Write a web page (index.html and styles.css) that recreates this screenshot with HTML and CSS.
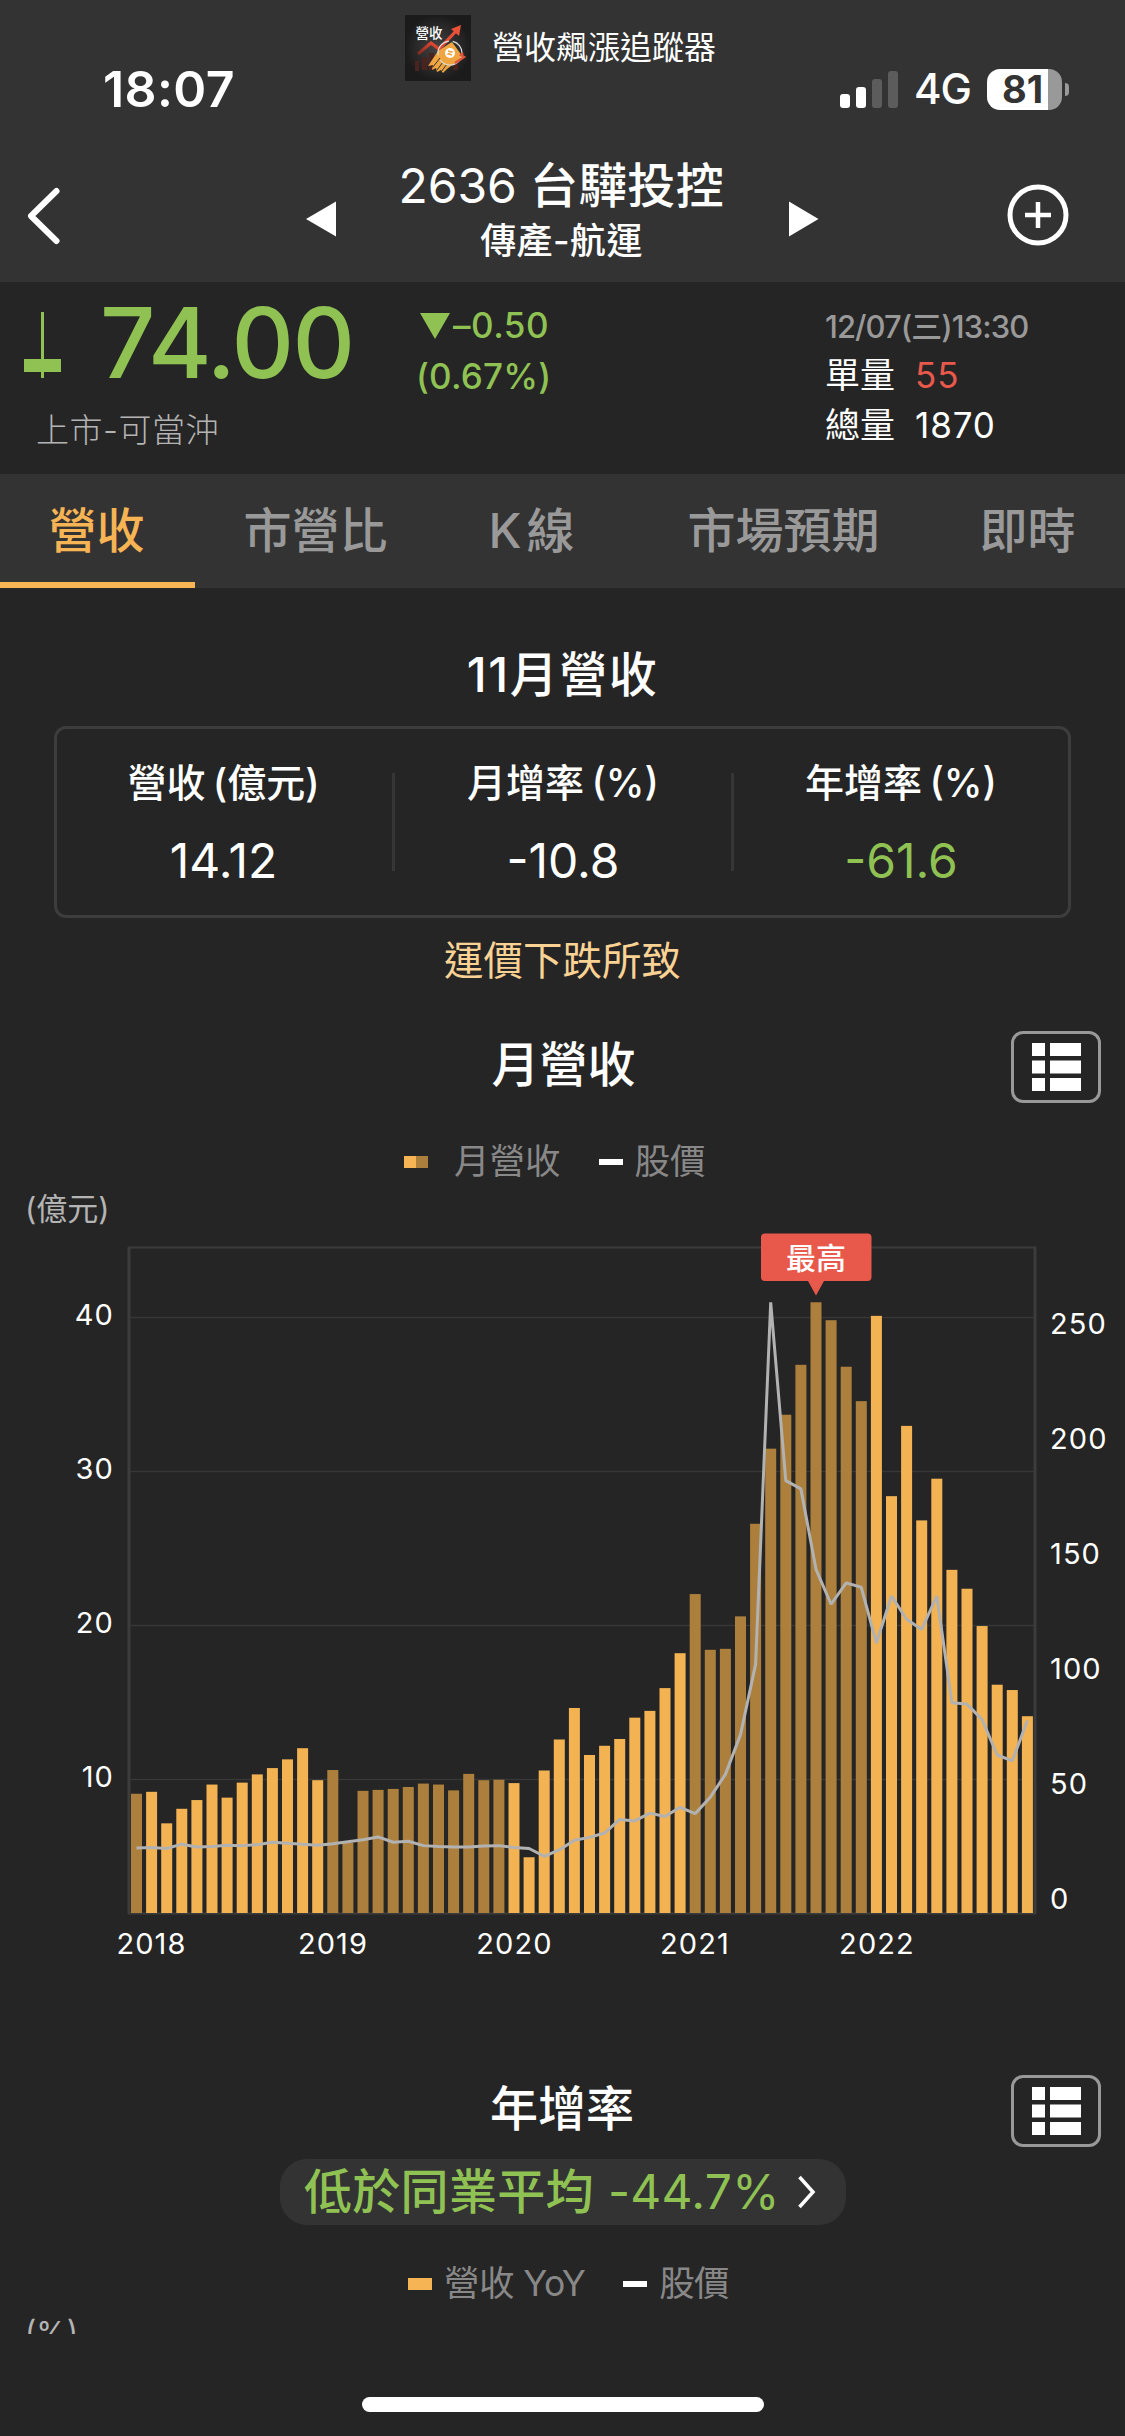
FILE: index.html
```html
<!DOCTYPE html>
<html lang="zh-Hant">
<head>
<meta charset="utf-8">
<title>2636 台驊投控</title>
<link rel="stylesheet" href="styles.css">
</head>
<body>
<div class="screen">
  <header class="header">
    <div class="status">
      <div class="time">18:07</div>
      <div class="app">
        <svg class="app-icon" viewBox="0 0 66 66">
          <defs>
            <radialGradient id="glow"><stop offset="0" stop-color="#444"/><stop offset="1" stop-color="#1b1b1b"/></radialGradient>
            <linearGradient id="rise" x1="0" y1="1" x2="1" y2="0"><stop offset="0" stop-color="#7a2a20"/><stop offset=".4" stop-color="#e0452f"/><stop offset="1" stop-color="#ea5238"/></linearGradient>
          </defs>
          <rect width="66" height="66" fill="url(#glow)"/>
          <path d="M10 46h4v10h-4zM17 42h5v13h-5zM24 38h5v17h-5zM48 44h5v11h-5z" fill="#4a231f"/>
          <path d="M13 39L26 28L34 34L52 15" fill="none" stroke="url(#rise)" stroke-width="3.2"/>
          <path d="M56 10L54 21L46 14Z" fill="#ea5238"/>
          <path d="M33 36L47 27L58 42L42 54L38 58L36 55L32 57L31 53L27 55L28 50L23 51Z" fill="#efa640"/>
          <path d="M28 52L35 43M32 55L38 47M36 57L42 49" stroke="#333" stroke-width="1"/>
          <circle cx="45" cy="38" r="12" fill="none" stroke="#ddd" stroke-width="1.2" stroke-dasharray="30 5 20 4"/>
          <circle cx="45" cy="38" r="5" fill="#fff"/>
          <path d="M43 36l4 1-4 2 4 1" fill="none" stroke="#efa640" stroke-width="1.3"/>
          <path d="M50 48L59 42L56 40L58 38" fill="none" stroke="#e0553b" stroke-width="2.5"/>
          <text x="10.500" y="23" class="app-icon-text">營收</text>
        </svg>
        <span class="app-name">營收飆漲追蹤器</span>
      </div>
      <div class="indicators">
        <svg class="signal" viewBox="0 0 58 38">
          <rect x="0" y="24" width="10" height="14" rx="3" fill="#fff"/>
          <rect x="16" y="17" width="10" height="21" rx="3" fill="#fff"/>
          <rect x="32" y="9" width="10" height="29" rx="3" fill="#5c5c5c"/>
          <rect x="48" y="1" width="10" height="37" rx="3" fill="#5c5c5c"/>
        </svg>
        <span class="network">4G</span>
        <span class="battery">81</span>
        <span class="battery-cap"></span>
      </div>
    </div>
    <nav class="nav">
      <svg class="back" viewBox="0 0 40 60"><path d="M33.500 5L8 30L33.500 55" fill="none" stroke="#fff" stroke-width="6" stroke-linecap="round" stroke-linejoin="round"/></svg>
      <svg class="tri" viewBox="0 0 30 36"><path d="M0 18L30 0.500V35.500Z" fill="#fff"/></svg>
      <div class="title-block">
        <h1 class="title"><span class="code">2636 </span>台驊投控</h1>
        <div class="sector">傳產-航運</div>
      </div>
      <svg class="tri" viewBox="0 0 30 36"><path d="M29.500 18L0 0.500V35.500Z" fill="#fff"/></svg>
      <svg class="add" viewBox="0 0 62 62"><circle cx="31" cy="31" r="28" fill="none" stroke="#fff" stroke-width="5"/><path d="M18 31H44M31 18V44" stroke="#fff" stroke-width="4.500"/></svg>
    </nav>
  </header>

  <section class="quote">
    <div class="price-col">
      <div class="price-row">
        <svg class="candle" viewBox="0 0 37 66"><path d="M18.500 0V66" stroke="#8fc253" stroke-width="3"/><rect y="47" width="37" height="13" fill="#8fc253"/></svg>
        <span class="price">74.00</span>
      </div>
      <div class="market">上市-可當沖</div>
    </div>
    <div class="change">
      <div class="change-row"><svg class="down" viewBox="0 0 30 26"><path d="M0 0H30L15 26Z" fill="#8fc253"/></svg><span class="delta">–0.50</span></div>
      <div class="change-row pct">(0.67%)</div>
    </div>
    <div class="volume">
      <div class="stamp">12/07(三)13:30</div>
      <div class="vol-row"><span>單量</span><span class="vol red">55</span></div>
      <div class="vol-row"><span>總量</span><span class="vol">1870</span></div>
    </div>
  </section>

  <div class="tabs">
    <div class="tab active">營收</div>
    <div class="tab">市營比</div>
    <div class="tab">K<span class="thin-gap"></span>線</div>
    <div class="tab">市場預期</div>
    <div class="tab">即時</div>
  </div>

  <main class="content">
    <h2 class="heading first">11月營收</h2>
    <div class="card">
      <div class="cell"><div class="label">營收 (億元)</div><div class="value">14.12</div></div>
      <div class="cell"><div class="label">月增率 (%)</div><div class="value">-10.8</div></div>
      <div class="cell"><div class="label">年增率 (%)</div><div class="value green">-61.6</div></div>
    </div>
    <div class="note">運價下跌所致</div>

    <div class="section-head">
      <h2 class="heading month">月營收</h2>
      <div class="table-btn"><svg viewBox="0 0 49 48"><path d="M0 0h13v13H0zM18 0h31v13H18zM0 17.500h13v13H0zM18 17.500h31v13H18zM0 35h13v13H0zM18 35h31v13H18z" fill="#fff"/></svg></div>
    </div>
    <div class="legend">
      <i class="swatch two"></i><span class="legend-text wide">月營收</span>
      <i class="dash"></i><span class="legend-text">股價</span>
    </div>
    <div class="unit">(億元)</div>
    <svg class="chart" id="chart" width="1125" height="760" viewBox="0 1228 1125 760"></svg>

    <div class="section-head second">
      <h2 class="heading">年增率</h2>
      <div class="table-btn"><svg viewBox="0 0 49 48"><path d="M0 0h13v13H0zM18 0h31v13H18zM0 17.500h13v13H0zM18 17.500h31v13H18zM0 35h13v13H0zM18 35h31v13H18z" fill="#fff"/></svg></div>
    </div>
    <div class="pill"><span class="pill-text">低於同業平均 </span><span class="pill-num">-44.7%</span><svg class="more" viewBox="0 0 20 36"><path d="M2.500 3L16 18L2.500 33" fill="none" stroke="#fff" stroke-width="3.500"/></svg></div>
    <div class="legend yoy">
      <i class="swatch"></i><span class="legend-text">營收 YoY</span>
      <i class="dash"></i><span class="legend-text">股價</span>
    </div>
    <div class="clip"><div class="unit">(%)</div></div>
  </main>
  <div class="home"></div>
</div>
<script src="chart.js"></script>
</body>
</html>
```
FILE: styles.css
```css
* { box-sizing: border-box; }
body {
  margin: 0;
  background: #252525;
  color: #fff;
  font-family: Inter, "Noto Sans CJK TC", sans-serif;
}
h1, h2 { margin: 0; }
svg { display: block; }
.screen { width: 1125px; height: 2436px; overflow: hidden; display: flex; flex-direction: column; }

/* status bar and navigation */
.header { height: 282px; background: #333; flex: none; }
.status { height: 133px; display: grid; grid-template-columns: 404px 436px 285px; }
.time { padding: 59px 0 0 103px; font-size: 50px; line-height: 60px; font-weight: 600; letter-spacing: 0.4px; }
.app { display: flex; align-items: center; height: 66px; margin: 15px 0 0 1px; gap: 21px; }
.app-icon { width: 66px; height: 66px; }
.app-icon-text { font-size: 13.5px; font-weight: 500; fill: #fff; }
.app-name { font-size: 32px; line-height: 40px; }
.indicators { display: flex; align-items: center; height: 42px; margin-top: 68px; }
.signal { width: 58px; height: 38px; }
.network { font-size: 42px; line-height: 42px; width: 58px; margin-left: 16px; letter-spacing: -1px; font-weight: 500; }
.battery {
  width: 75px; height: 41px; margin-left: 15px; padding-right: 4px; border-radius: 13px;
  background: linear-gradient(to right, #fff 61px, #999 61px);
  color: #333; font-size: 38px; line-height: 41px; font-weight: 700; text-align: center;
}
.battery-cap { width: 4px; height: 13px; margin-left: 3px; background: #999; border-radius: 0 4px 4px 0; }
.nav { height: 149px; padding-top: 15px; display: grid; grid-template-columns: 306px 30px 453px 30px 306px; align-items: center; }
.back { width: 40px; height: 60px; margin: 2px 0 0 23px; }
.tri { width: 30px; height: 36px; margin-top: 7px; }
.title-block { text-align: center; margin-top: -6px; }
.title { font-size: 48px; line-height: 58px; font-weight: 500; letter-spacing: 0.6px; margin-left: -2px; }
.code { font-weight: 400; letter-spacing: -0.1px; }
.sector { font-size: 36px; line-height: 52px; font-weight: 500; letter-spacing: 0.4px; margin-left: -2px; }
.add { width: 62px; height: 62px; margin-left: 188px; }

/* price summary */
.quote { height: 192px; flex: none; display: grid; grid-template-columns: 418px 407px 300px; }
.price-row { display: flex; height: 124px; }
.candle { width: 37px; height: 66px; margin: 30px 0 0 24px; }
.price { margin: 0 0 0 39px; font-size: 97px; line-height: 122px; font-weight: 500; color: #8fc253; letter-spacing: -1.8px; }
.market { padding-left: 36px; font-size: 33px; line-height: 48px; color: #b4b4b4; font-weight: 300; letter-spacing: 0.5px; }
.change { padding-top: 18px; color: #8fc253; font-size: 35px; font-weight: 500; }
.change-row { display: flex; align-items: center; height: 51px; line-height: 51px; }
.down { width: 30px; height: 26px; margin-left: 2px; }
.delta { margin-left: 3px; letter-spacing: 0.5px; }
.pct { margin-left: -2px; letter-spacing: 0.2px; }
.volume { padding-top: 22px; }
.stamp { font-size: 31px; line-height: 46px; font-weight: 500; color: #999; letter-spacing: -0.95px; }
.vol-row { display: flex; font-size: 35px; line-height: 50px; }
.vol { margin-left: 20px; letter-spacing: 0.9px; }
.red { color: #e9594b; }
.green { color: #8fc253; }

/* tabs */
.tabs { height: 114px; flex: none; display: grid; grid-template-columns: 195px 241px 191px 313px 175px; background: #333; }
.tab { height: 114px; font-size: 48px; line-height: 114px; font-weight: 500; text-align: center; color: #999; }
.tab.active { color: #f6b454; box-shadow: inset 0 -6px #f6b454; padding-right: 2px; }
.thin-gap { display: inline-block; width: 5px; }

/* monthly summary */
.content { display: flex; flex-direction: column; }
.heading { font-size: 48px; line-height: 60px; font-weight: 500; text-align: center; }
.heading.first { margin-top: 57px; letter-spacing: 1.5px; }
.card { width: 1017px; height: 192px; margin: 21px 0 0 54px; border: 3px solid #3d3d3d; border-radius: 12px; display: grid; grid-template-columns: 335px 339px 1fr; padding: 44px 0; }
.cell { text-align: center; height: 98px; }
.cell:first-child { padding-right: 2px; }
.cell + .cell { border-left: 3px solid #363636; }
.label { margin-top: -15px; font-size: 39px; line-height: 50px; font-weight: 500; word-spacing: -3px; }
.value { margin-top: 25px; font-size: 48px; line-height: 56px; }
.note { margin-top: 18px; text-align: center; font-size: 39.500px; line-height: 50px; color: #f9d294; }

/* section titles and legends */
.section-head { display: grid; grid-template-columns: 114px 897px 90px; height: 72px; margin-top: 45px; align-items: center; }
.section-head .heading { grid-column: 2; margin-top: -5px; padding-right: 1px; }
.section-head .month { padding: 0 0 0 2px; }
.section-head.second { margin-top: 87px; }
.table-btn { width: 90px; height: 72px; border: 3px solid #999; border-radius: 12px; padding: 9px 0 0 18px; }
.table-btn svg { width: 49px; height: 48px; }
.legend { display: flex; align-items: center; height: 44px; margin: 37px 0 0 404px; font-size: 35.500px; line-height: 44px; color: #888; }
.swatch { width: 24px; height: 12px; background: #f6b454; }
.swatch.two { background: linear-gradient(to right, #f6b454 50%, #ac803c 50%); }
.legend-text { margin-left: 12px; }
.legend-text.wide { margin-left: 26px; }
.dash { width: 24px; height: 6px; margin-left: 38px; background: #fff; }
.unit { margin: 6px 0 0 25px; font-size: 31px; line-height: 38px; color: #b4b4b4; }
.chart { flex: none; }
.bar { fill: #f3b353; }
.bar.alt { fill: #ac803c; }
.tick { fill: #fff; font-size: 29px; letter-spacing: 1.1px; }
.badge-text { fill: #fff; font-size: 30px; font-weight: 500; text-anchor: middle; }

.pill { display: flex; align-items: center; width: 566px; height: 66px; margin: 12px 0 0 280px; padding-left: 24px; border-radius: 27px; background: #333; color: #8fc253; font-size: 48px; line-height: 66px; font-weight: 500; white-space: pre; }
.pill-text { letter-spacing: 0.3px; }
.pill-num { margin-left: 1px; font-weight: 400; letter-spacing: 0.3px; }
.more { width: 20px; height: 36px; margin-left: 17px; }
.legend.yoy { margin: 37px 0 0 408px; }
.yoy .legend-text { letter-spacing: -0.6px; }
.clip { height: 28px; overflow: hidden; }
.clip .unit { margin-top: 8px; }
.home { width: 402px; height: 15px; margin: 63px 0 0 362px; border-radius: 8px; background: #fff; flex: none; }
```
FILE: chart.js
```js
// Heights above the baseline, in chart units
const revenue = [
  246, 250, 185, 215, 233, 265, 238, 269, 286, 299, 317, 340, 274, 295, 145, 252,
  254, 256, 260, 267, 265, 253, 287, 274, 275, 268, 115, 294, 358, 423, 326, 345,
  359, 403, 417, 464, 536, 658, 543, 545, 612, 803, 958, 1028, 1131, 1260, 1223,
  1127, 1056, 1232, 860, 1005, 810, 896, 708, 669, 592, 471, 460, 406];
const stock = [
  134, 135, 133, 142, 136, 137, 140, 139, 141, 146, 144, 142, 140, 143, 147, 151,
  157, 146, 148, 139, 137, 136, 136, 138, 139, 135, 133, 117, 130, 150, 156, 165,
  193, 190, 206, 199, 218, 205, 239, 286, 368, 513, 1260, 892, 875, 709, 637,
  681, 672, 557, 654, 606, 585, 654, 434, 431, 399, 326, 314, 397];

const BASE = 1913, SCALE = 0.4847, FIRST = 136.5, STEP = 15.1;
const x = i => FIRST + i * STEP;
const y = v => BASE - v * SCALE;
const isAlt = i => i === 0 || (i >= 13 && i <= 24) || (i >= 37 && i <= 48);

let out = '<path d="M128 1247.500H1036M128 1913.500H1036" stroke="#3c3c3c" stroke-width="2"/>' +
  '<path d="M129 1247V1914M1035 1247V1914" stroke="#3c3c3c" stroke-width="3"/>';
[1318, 1472, 1626, 1780].forEach((gy, i) => {
  out += `<path d="M130 ${gy - 0.5}H1034" stroke="#373737" stroke-width="1.500"/>`;
  out += `<text class="tick" text-anchor="end" x="114" y="${gy + 7}">${40 - i * 10}</text>`;
});
revenue.forEach((v, i) => {
  out += `<rect class="bar${isAlt(i) ? ' alt' : ''}" x="${x(i) - 5.5}" y="${y(v)}" width="11" height="${v * SCALE}"/>`;
});
out += `<polyline points="${stock.map((v, i) => x(i) + ',' + y(v)).join(' ')}" fill="none" stroke="#b2b2b2" stroke-width="3" stroke-linejoin="bevel"/>`;
[250, 200, 150, 100, 50, 0].forEach((n, i) => {
  out += `<text class="tick" x="1050" y="${1334 + i * 115}">${n}</text>`;
});
[151.5, 333, 514.5, 695, 877].forEach((cx, i) => {
  out += `<text class="tick" text-anchor="middle" x="${cx}" y="1954">${2018 + i}</text>`;
});
out += '<path d="M765 1233.500H867.500Q871.500 1233.500 871.500 1237.500V1277Q871.500 1281 867.500 1281H824L816 1295.500L808 1281H765Q761 1281 761 1277V1237.500Q761 1233.500 765 1233.500Z" fill="#e9594b"/>';
out += '<text class="badge-text" x="816" y="1269">最高</text>';
document.getElementById('chart').innerHTML = out;
```
